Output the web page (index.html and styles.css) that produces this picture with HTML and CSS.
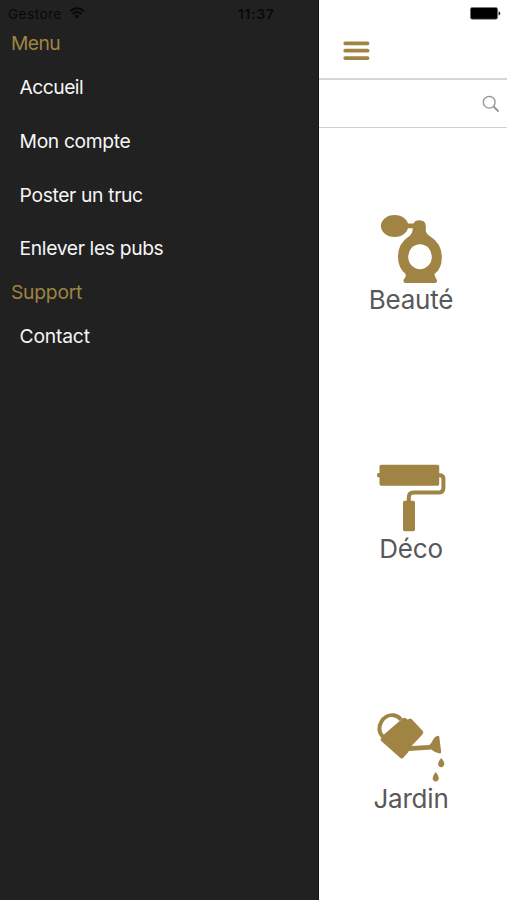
FILE: index.html
```
<!DOCTYPE html>
<html lang="fr">
<head>
<meta charset="utf-8">
<title>Menu</title>
<link rel="stylesheet" href="styles.css">
</head>
<body>
<div class="app">
  <aside class="drawer">
    <div class="status">
      <span class="carrier">Gestore</span>
      <svg class="wifi" viewBox="0 0 16 12" width="16" height="12"><g fill="none" stroke="#080808" stroke-width="1.9"><path d="M1 4.3Q8-1.9 15 4.3"/><path d="M3.5 7Q8 3.1 12.5 7"/></g><path d="M5.6 8.7Q8 6.8 10.4 8.7L8 11.2Z" fill="#080808"/></svg>
      <span class="time">11:37</span>
    </div>
    <nav>
      <h2 class="heading menu-title">Menu</h2>
      <ul class="list">
        <li class="item accueil">Accueil</li>
        <li class="item compte">Mon compte</li>
        <li class="item poster">Poster un truc</li>
        <li class="item pubs">Enlever les pubs</li>
      </ul>
      <h2 class="heading support-title">Support</h2>
      <ul class="list">
        <li class="item contact">Contact</li>
      </ul>
    </nav>
  </aside>
  <main class="content">
    <div class="battery-bar">
      <svg viewBox="0 0 31 13" width="31" height="13"><rect x=".4" y=".4" width="27.2" height="11.8" rx="1.8" fill="#000" stroke="#777" stroke-width=".7"/><path d="M28.6 4.2Q30.2 4.6 30.2 6.3T28.6 8.4Z" fill="#111"/></svg>
    </div>
    <header class="toolbar">
      <svg viewBox="0 0 27 20" width="27" height="20"><path d="M2.2 2.3H24.6M2.2 9.7H24.6M2.2 17.1H24.6" stroke="#9f8444" stroke-width="3.7" stroke-linecap="round"/></svg>
    </header>
    <div class="search">
      <svg viewBox="0 0 18 18" width="18" height="18" fill="none" stroke="#949494"><circle cx="7.2" cy="7.2" r="5.9" stroke-width="1.3"/><path d="M11.5 11.5L16.6 16.5" stroke-width="1.8"/></svg>
    </div>
    <section class="category beaute">
      <svg viewBox="0 0 100 75" width="100" height="75" fill="#9f8444"><ellipse cx="29.6" cy="16" rx="13.7" ry="11"/><path d="M41 13.6H48.5Q49.5 10.2 54.5 10.2Q60.8 10.2 60.8 16.5V21.5Q61.5 24.2 65 26.2Q76.8 33.5 76.8 47Q76.8 59 69.5 64L70 66.5L72 70.2V71.2Q72 73 70.2 73H40.5Q38.5 73 38.5 71.2V70L40.7 66.5V64Q33 58 33 47Q33 33.5 43.5 26.8Q47.7 24 47.8 18.3H41Z"/><ellipse cx="55" cy="46.7" rx="11.8" ry="12.5" fill="#fff"/></svg>
      <span class="label">Beauté</span>
    </section>
    <section class="category deco">
      <svg viewBox="0 0 100 75" width="100" height="75" fill="#9f8444"><rect x="14.5" y="5.7" width="59.7" height="21" rx="1.6"/><rect x="12" y="14.1" width="5" height="4.2" rx="1.5"/><path d="M73 16.2H74.5Q78.4 16.2 78.4 19.7V28.7Q78.4 33.5 73.5 33.5H48.5Q43.8 33.5 43.8 38.2V43" fill="none" stroke="#9f8444" stroke-width="4"/><rect x="38" y="41.7" width="12" height="30.5" rx="1.8"/></svg>
      <span class="label">Déco</span>
    </section>
    <section class="category jardin">
      <svg viewBox="0 0 100 75" width="100" height="75" fill="#9f8444"><path d="M17.6 27.5C9.8 18.5 18 4.8 28.8 6.3Q33.5 7 36 10.8" fill="none" stroke="#9f8444" stroke-width="3.9"/><path d="M17.2 27L36.4 10.6L37.8 9.3Q39.5 8 41.2 9.5L42.2 10.5L46 9.4L57.6 21.8Q59.1 23.6 57.4 25.4L46.5 37L64.2 35.9Q66.2 35 67.5 31.7Q69.5 27.2 73.2 26.8Q74.2 26.8 74.3 28L76.2 43Q76.2 44.5 74.6 44.4Q69.5 43.7 66.3 40.6L43.8 41.9L43 43.5L38 49Q36.7 50.2 35.4 49L16 31.7Q15 30.7 16 29.6Z"/><path d="M76.2 48.9Q79.6 52.5 79.3 55.1Q79 58.2 76.2 58.2Q73.3 58.2 73.1 55.1Q73 52.5 76.2 48.9ZM70.7 63Q74 66.8 73.8 69.3Q73.5 72.4 70.7 72.4Q67.8 72.4 67.6 69.3Q67.5 66.8 70.7 63Z"/></svg>
      <span class="label">Jardin</span>
    </section>
  </main>
</div>
</body>
</html>
```
FILE: styles.css
```
* { box-sizing: border-box; }
body { margin: 0; background: #fff; font-family: Inter, "Liberation Sans", sans-serif; }
.app { display: flex; width: 507px; height: 900px; overflow: hidden; }
.drawer { flex: 0 0 319px; background: #212121; border-right: 1px solid #151515; }
.status { display: flex; align-items: center; height: 26px; padding: 1px 0 0 8px; font-size: 13.5px; color: #080808; }
.carrier { width: 62px; letter-spacing: .55px; }
.wifi { margin-top: -2px; margin-left: -1px; }
.time { margin-left: 153px; font-weight: 600; letter-spacing: .9px; }
.heading { margin: 0; padding-left: 11px; height: 34px; line-height: 34px; font-size: 19.3px; font-weight: 400; letter-spacing: -.25px; color: #9f8444; }
.menu-title { letter-spacing: -.6px; }
.item { height: 53.8px; padding-left: 19.6px; line-height: 55px; font-size: 19.3px; letter-spacing: -.36px; color: #f6f6f6; white-space: nowrap; }
.list { margin: 0; padding: 0; list-style: none; }
.accueil { letter-spacing: -.55px; }
.contact { letter-spacing: -.2px; }
.content { flex: 1; min-width: 0; background: #fff; }
.battery-bar { height: 26px; padding: 7px 0 0 151px; }
.toolbar { height: 54px; padding: 15px 0 0 24px; border-bottom: 2px solid #d5d5d5; }
.search { height: 48px; padding: 15px 0 0 163px; border-bottom: 1px solid #cfcfcf; }
.battery-bar svg, .toolbar svg, .search svg { display: block; }
.category { display: flex; flex-direction: column; align-items: center; height: 249.3px; padding: 82px 4px 0 0; }
.category svg { flex: none; margin-left: 8px; }
.label { height: 30px; line-height: 30px; font-size: 26px; letter-spacing: -.2px; color: #58585a; }
```
